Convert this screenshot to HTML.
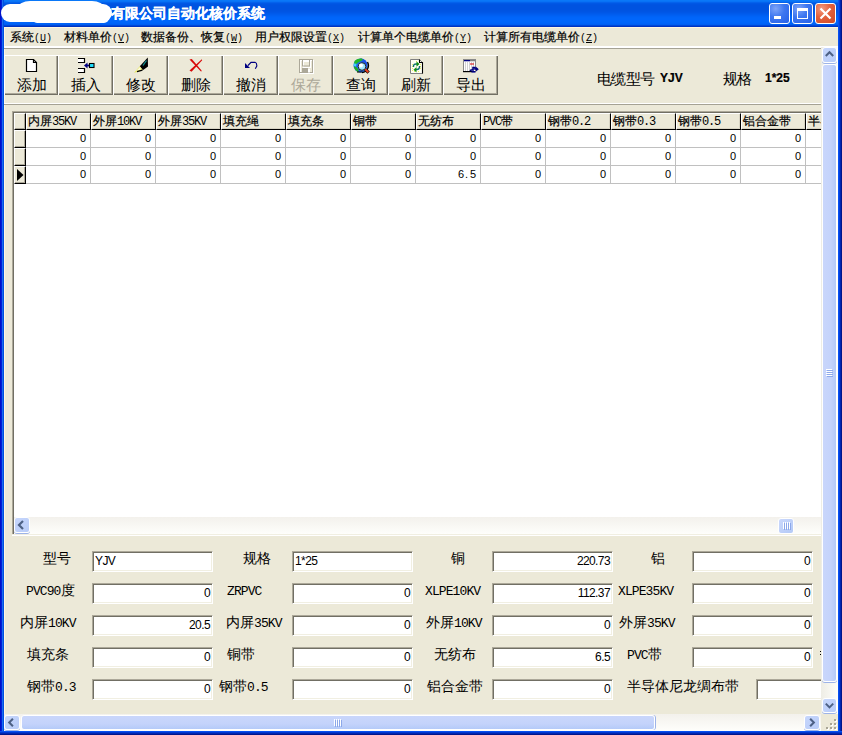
<!DOCTYPE html><html><head><meta charset="utf-8"><style>
html,body{margin:0;padding:0;}
body{width:842px;height:735px;overflow:hidden;position:relative;background:#ECE9D8;font-family:"Liberation Sans",sans-serif;}
div{position:absolute;box-sizing:border-box;}
.t{white-space:nowrap;line-height:1;color:#000;-webkit-text-stroke:0.2px currentColor;}
.m{font-family:"Liberation Mono",monospace;-webkit-text-stroke:0;}
.cj{font-family:"Liberation Sans",sans-serif;}
.tb{position:absolute;}
</style></head><body>
<div style="left:0px;top:0px;width:842px;height:27px;background:linear-gradient(to bottom,#0A78F8 0px, #0A78F8 1px,#0872F5 1px, #0872F5 2px,#0462EC 2px, #0462EC 3px,#0058E5 3px, #0058E5 4px,#0054E2 4px, #0054E2 5px,#0053E0 5px, #0053E0 6px,#0053E0 6px, #0053E0 7px,#0053E0 7px, #0053E0 8px,#0053E0 8px, #0053E0 9px,#0053E1 9px, #0053E1 10px,#0054E2 10px, #0054E2 11px,#0055E4 11px, #0055E4 12px,#0057E7 12px, #0057E7 13px,#005AEB 13px, #005AEB 14px,#005DEF 14px, #005DEF 15px,#0060F3 15px, #0060F3 16px,#0063F7 16px, #0063F7 17px,#0065FA 17px, #0065FA 18px,#0066FB 18px, #0066FB 19px,#0066FC 19px, #0066FC 20px,#0066FC 20px, #0066FC 21px,#0066FB 21px, #0066FB 22px,#0065FA 22px, #0065FA 23px,#0063F8 23px, #0063F8 24px,#005FF2 24px, #005FF2 25px,#0048D8 25px, #0048D8 26px,#0034C2 26px, #0034C2 27px);"></div>
<div class="t" style="left:111px;top:6px;color:#fff;font-size:14px;font-weight:bold;">有限公司自动化核价系统</div>
<div style="left:769px;top:3px;width:21px;height:21px;border:1px solid #fff;border-radius:3px;background:radial-gradient(circle at 30% 25%, #7EA4F8 0%, #3D76F0 45%, #2560E8 100%);">
<div style="left:4px;top:12px;width:7px;height:3px;background:#fff;"></div>
</div>
<div style="left:792px;top:3px;width:21px;height:21px;border:1px solid #fff;border-radius:3px;background:radial-gradient(circle at 30% 25%, #7EA4F8 0%, #3D76F0 45%, #2560E8 100%);">
<div style="left:4px;top:4px;width:11px;height:11px;border:1px solid #fff;border-top-width:3px;"></div>
</div>
<div style="left:815px;top:3px;width:21px;height:21px;border:1px solid #fff;border-radius:3px;background:radial-gradient(circle at 30% 25%, #F39B80 0%, #E3603C 45%, #D04A25 100%);">
<svg width="19" height="19" style="position:absolute;left:0;top:0" viewBox="0 0 19 19"><path d="M4.5 4.5 L14.5 14.5 M14.5 4.5 L4.5 14.5" stroke="#fff" stroke-width="2.2"/></svg>
</div>
<div style="left:0px;top:0px;width:1px;height:735px;background:#0010C8;"></div>
<div style="left:1px;top:0px;width:1px;height:735px;background:#0020D8;"></div>
<div style="left:2px;top:0px;width:1px;height:735px;background:#1A6CF0;"></div>
<div style="left:3px;top:0px;width:1px;height:735px;background:#0050E0;"></div>
<div style="left:838px;top:0px;width:1px;height:735px;background:#0850F0;"></div>
<div style="left:839px;top:0px;width:1px;height:735px;background:#003EDC;"></div>
<div style="left:840px;top:0px;width:1px;height:735px;background:#0026B0;"></div>
<div style="left:841px;top:0px;width:1px;height:735px;background:#00158A;"></div>
<div style="left:0px;top:731px;width:842px;height:1px;background:#0850F0;"></div>
<div style="left:0px;top:732px;width:842px;height:1px;background:#0038D0;"></div>
<div style="left:0px;top:733px;width:842px;height:1px;background:#0026B0;"></div>
<div style="left:0px;top:734px;width:842px;height:1px;background:#00168C;"></div>
<div style="left:0px;top:0px;width:842px;height:27px;background:linear-gradient(to bottom,#0A78F8 0px, #0A78F8 1px,#0872F5 1px, #0872F5 2px,#0462EC 2px, #0462EC 3px,#0058E5 3px, #0058E5 4px,#0054E2 4px, #0054E2 5px,#0053E0 5px, #0053E0 6px,#0053E0 6px, #0053E0 7px,#0053E0 7px, #0053E0 8px,#0053E0 8px, #0053E0 9px,#0053E1 9px, #0053E1 10px,#0054E2 10px, #0054E2 11px,#0055E4 11px, #0055E4 12px,#0057E7 12px, #0057E7 13px,#005AEB 13px, #005AEB 14px,#005DEF 14px, #005DEF 15px,#0060F3 15px, #0060F3 16px,#0063F7 16px, #0063F7 17px,#0065FA 17px, #0065FA 18px,#0066FB 18px, #0066FB 19px,#0066FC 19px, #0066FC 20px,#0066FC 20px, #0066FC 21px,#0066FB 21px, #0066FB 22px,#0065FA 22px, #0065FA 23px,#0063F8 23px, #0063F8 24px,#005FF2 24px, #005FF2 25px,#0048D8 25px, #0048D8 26px,#0034C2 26px, #0034C2 27px);z-index:-1"></div>
<div style="left:4px;top:27px;width:834px;height:1px;background:#FFF6E0;"></div>
<div style="left:4px;top:27px;width:1px;height:704px;background:#FFF7E4;"></div>
<div style="left:1px;top:4px;width:111px;height:18px;background:#fff;border-radius:9px;filter:blur(0.4px);"></div>
<div style="left:18px;top:1px;width:86px;height:14px;background:#fff;border-radius:12px/7px;filter:blur(0.4px);"></div>
<div style="left:32px;top:12px;width:77px;height:11px;background:#fff;border-radius:5px;filter:blur(0.4px);"></div>
<div class="t" style="left:10px;top:31px;font-size:12px;">系统<span class="m" style="font-size:10px;">(<u>U</u>)</span></div>
<div class="t" style="left:64px;top:31px;font-size:12px;">材料单价<span class="m" style="font-size:10px;">(<u>V</u>)</span></div>
<div class="t" style="left:141px;top:31px;font-size:12px;">数据备份、恢复<span class="m" style="font-size:10px;">(<u>W</u>)</span></div>
<div class="t" style="left:255px;top:31px;font-size:12px;">用户权限设置<span class="m" style="font-size:10px;">(<u>X</u>)</span></div>
<div class="t" style="left:358px;top:31px;font-size:12px;">计算单个电缆单价<span class="m" style="font-size:10px;">(<u>Y</u>)</span></div>
<div class="t" style="left:484px;top:31px;font-size:12px;">计算所有电缆单价<span class="m" style="font-size:10px;">(<u>Z</u>)</span></div>
<div style="left:4px;top:46px;width:834px;height:2px;background:#fff;"></div>
<div style="left:4px;top:48px;width:817px;height:1px;background:#A5A294;"></div>
<div style="left:4px;top:55px;width:54px;height:40px;background:#ECE9D8;border-left:1px solid #fff;border-top:1px solid #fff;box-shadow:inset -1px -1px 0 #716F64, inset -2px -2px 0 #ACA899;"></div>
<div class="t" style="left:17px;top:77px;font-size:15px;color:#000;-webkit-text-stroke:0;">添加</div>
<div style="left:58px;top:55px;width:55px;height:40px;background:#ECE9D8;border-left:1px solid #fff;border-top:1px solid #fff;box-shadow:inset -1px -1px 0 #716F64, inset -2px -2px 0 #ACA899;"></div>
<div class="t" style="left:71px;top:77px;font-size:15px;color:#000;-webkit-text-stroke:0;">插入</div>
<div style="left:113px;top:55px;width:55px;height:40px;background:#ECE9D8;border-left:1px solid #fff;border-top:1px solid #fff;box-shadow:inset -1px -1px 0 #716F64, inset -2px -2px 0 #ACA899;"></div>
<div class="t" style="left:126px;top:77px;font-size:15px;color:#000;-webkit-text-stroke:0;">修改</div>
<div style="left:168px;top:55px;width:55px;height:40px;background:#ECE9D8;border-left:1px solid #fff;border-top:1px solid #fff;box-shadow:inset -1px -1px 0 #716F64, inset -2px -2px 0 #ACA899;"></div>
<div class="t" style="left:181px;top:77px;font-size:15px;color:#000;-webkit-text-stroke:0;">删除</div>
<div style="left:223px;top:55px;width:55px;height:40px;background:#ECE9D8;border-left:1px solid #fff;border-top:1px solid #fff;box-shadow:inset -1px -1px 0 #716F64, inset -2px -2px 0 #ACA899;"></div>
<div class="t" style="left:236px;top:77px;font-size:15px;color:#000;-webkit-text-stroke:0;">撤消</div>
<div style="left:278px;top:55px;width:55px;height:40px;background:#ECE9D8;border-left:1px solid #fff;border-top:1px solid #fff;box-shadow:inset -1px -1px 0 #716F64, inset -2px -2px 0 #ACA899;"></div>
<div class="t" style="left:291px;top:77px;font-size:15px;color:#ACA899;-webkit-text-stroke:0;">保存</div>
<div style="left:333px;top:55px;width:55px;height:40px;background:#ECE9D8;border-left:1px solid #fff;border-top:1px solid #fff;box-shadow:inset -1px -1px 0 #716F64, inset -2px -2px 0 #ACA899;"></div>
<div class="t" style="left:346px;top:77px;font-size:15px;color:#000;-webkit-text-stroke:0;">查询</div>
<div style="left:388px;top:55px;width:55px;height:40px;background:#ECE9D8;border-left:1px solid #fff;border-top:1px solid #fff;box-shadow:inset -1px -1px 0 #716F64, inset -2px -2px 0 #ACA899;"></div>
<div class="t" style="left:401px;top:77px;font-size:15px;color:#000;-webkit-text-stroke:0;">刷新</div>
<div style="left:443px;top:55px;width:55px;height:40px;background:#ECE9D8;border-left:1px solid #fff;border-top:1px solid #fff;box-shadow:inset -1px -1px 0 #716F64, inset -2px -2px 0 #ACA899;"></div>
<div class="t" style="left:456px;top:77px;font-size:15px;color:#000;-webkit-text-stroke:0;">导出</div>
<div style="left:4px;top:103px;width:817px;height:1px;background:#fff;"></div>
<div style="left:4px;top:104px;width:817px;height:1px;background:#A5A294;"></div>
<svg width="842" height="100" style="position:absolute;left:0;top:0" viewBox="0 0 842 100">
<!-- new doc -->
<path d="M26.5 59.5 H33.5 L36.5 62.5 V71.5 H26.5 Z" fill="#fff" stroke="#000" stroke-width="1.2"/>
<path d="M33.5 59.5 V62.5 H36.5" fill="none" stroke="#000" stroke-width="1.2"/>
<!-- insert -->
<path d="M78 58.5 H84.5 V62.5 H78" fill="#fff" stroke="#000" stroke-width="1.2"/>
<path d="M78 68.5 H84.5 V72.5 H78" fill="#fff" stroke="#000" stroke-width="1.2"/>
<path d="M84 65.5 L87.5 62.5 V68.5 Z" fill="#000080"/>
<rect x="86" y="64.6" width="3.5" height="1.8" fill="#000080"/>
<rect x="89.5" y="63.5" width="4.5" height="4" fill="#20E0FF" stroke="#000" stroke-width="1.1"/>
<!-- edit pen -->
<path d="M147.8 57.6 L148 66.5 L142.8 70.3 L139.8 66.3 Z" fill="#000"/>
<path d="M139.8 66.3 L142.6 69.8 L138 71.8 L134 72.8 Z" fill="#E8E860"/>
<path d="M140 67 L136 71 L141 69.5 Z" fill="#fff" opacity="0.8"/>
<path d="M137 71.6 L142.5 70.2" stroke="#000" stroke-width="1.2"/>
<path d="M146.5 60.5 L143 65.5" stroke="#139090" stroke-width="1.3"/>
<!-- delete X -->
<path d="M189.5 59.5 L191.8 59 L201.6 70.6 L201.2 71.8 Z" fill="#D80808"/>
<path d="M201.8 59.2 L202.2 60.2 L191.5 71.8 L189.5 70.5 Z" fill="#D80808"/>
<!-- undo -->
<path d="M245 63 V68 H250 Z" fill="#000080"/>
<path d="M248 65.5 L251 62.3 H255 Q257 62.8 256.8 66 L255.3 68.8" fill="none" stroke="#000080" stroke-width="1.15"/>
<!-- save (disabled) -->
<g transform="translate(1,1)" fill="none" stroke="#fff" stroke-width="1">
<rect x="299.5" y="59.5" width="13" height="13"/><rect x="302.5" y="60.5" width="7" height="6"/>
</g>
<rect x="299.5" y="59.5" width="13" height="13" fill="none" stroke="#ACA899"/>
<rect x="302.5" y="59.5" width="7" height="6.5" fill="none" stroke="#ACA899"/>
<rect x="302" y="68" width="6" height="4.5" fill="#ACA899"/>
<rect x="308" y="69" width="2" height="3.5" fill="#fff"/>
<!-- query globe -->
<circle cx="360.5" cy="65.5" r="7" fill="#1E64F0"/>
<path d="M360.5 58.5 A7 7 0 0 1 367.5 65.5 L363 65 Z" fill="#1850E8"/>
<path d="M354.5 61 Q357 58 362 58.6 L363 60 Q360 61.5 357.5 63 L355 65.5 Q353.6 63.5 354.5 61 Z" fill="#20B828"/>
<path d="M354 63.5 L356.5 63.8 L356 66.5 L353.6 66 Z" fill="#40D0FF"/>
<path d="M353.8 66.5 Q356.5 66 358 69 L359 72.3 Q355 71.2 353.8 66.5 Z" fill="#20B020"/>
<path d="M367.5 62 A7 7 0 0 1 362 72.5" fill="none" stroke="#000" stroke-width="1.3"/>
<path d="M357 72 H362" stroke="#000" stroke-width="1"/>
<circle cx="362" cy="66.5" r="3.8" fill="#9EE6FF" stroke="#282828" stroke-width="1"/>
<circle cx="361" cy="65.5" r="1.9" fill="#fff"/>
<path d="M365.3 69.3 L368.6 72.6" stroke="#000" stroke-width="3.2"/>
<path d="M365.3 69.3 L368.3 72.3" stroke="#E84020" stroke-width="2"/>
<!-- refresh -->
<path d="M410.5 59.5 H419.5 L422.5 62.5 V73.5 H410.5 Z" fill="#FDFDF4" stroke="#808080"/>
<path d="M419.5 59.5 V62.5 H422.5 V73.5" fill="none" stroke="#000" stroke-width="1.1"/>
<g fill="#F0F060"><rect x="412" y="64" width="1" height="1"/><rect x="412" y="66" width="1" height="1"/><rect x="412" y="68" width="1" height="1"/><rect x="412" y="70" width="1" height="1"/><rect x="414" y="71" width="1" height="1"/><rect x="416" y="61" width="1" height="1"/><rect x="420" y="64" width="1" height="1"/><rect x="420" y="66" width="1" height="1"/><rect x="420" y="68" width="1" height="1"/><rect x="418" y="71" width="1" height="1"/></g>
<path d="M413.5 67 V65.5 Q414 64 416 64 H417.5" fill="none" stroke="#107070" stroke-width="1.4"/>
<path d="M416.5 61.5 L419.5 64 L416.5 66.8 Z" fill="#109010"/>
<path d="M419.5 66 V67.5 Q419 69.5 417 69.5 H415.5" fill="none" stroke="#107070" stroke-width="1.4"/>
<path d="M416.5 67 L413.5 69.8 L416.5 72.5 Z" fill="#109010"/>
<!-- export -->
<rect x="463.5" y="59.5" width="12" height="12" fill="#fff" stroke="#8A8A8A"/>
<rect x="464" y="60" width="6" height="1.3" fill="#000080"/>
<rect x="470" y="60" width="5" height="1.3" fill="#808080"/>
<path d="M465.5 62 V71 M467.5 62 V71 M469.5 62 V71 M471.5 62 V71 M473.5 62 V71" stroke="#C8C8C8" stroke-width="0.8"/>
<rect x="463" y="71" width="9" height="1.2" fill="#000"/>
<rect x="470.5" y="63" width="1" height="2" fill="#E00000"/><rect x="472.5" y="63" width="1" height="2" fill="#E00000"/>
<path d="M470 71 L471 70 H473 V67.5 H475 V69 H477.5" fill="none" stroke="#000080" stroke-width="1.6"/>
<path d="M476 66.8 L478.8 69.2 L476 71.6 Z" fill="#000080"/>
<rect x="471.5" y="71" width="4" height="1.6" fill="#000080"/>
</svg>
<div class="t" style="left:597px;top:71px;font-size:15px;letter-spacing:-0.6px;-webkit-text-stroke:0;">电缆型号</div>
<div class="t" style="left:660px;top:72px;font-size:12px;font-weight:bold;">YJV</div>
<div class="t" style="left:723px;top:71px;font-size:15px;letter-spacing:-0.6px;-webkit-text-stroke:0;">规格</div>
<div class="t" style="left:765px;top:72px;font-size:12px;font-weight:bold;">1*25</div>
<div style="left:12px;top:111px;width:810px;height:1px;background:#ACA899;"></div>
<div style="left:12px;top:111px;width:1px;height:425px;background:#ACA899;"></div>
<div style="left:13px;top:112px;width:809px;height:1px;background:#716F64;"></div>
<div style="left:13px;top:112px;width:1px;height:423px;background:#716F64;"></div>
<div style="left:14px;top:113px;width:807px;height:404px;background:#fff;"></div>
<div style="left:14px;top:113px;width:12px;height:17px;background:#ECE9D8;border-left:1px solid #fff;border-top:1px solid #fff;border-right:1px solid #000;border-bottom:1px solid #000;box-shadow:inset -1px -1px 0 #ACA899;"></div>
<div style="left:14px;top:113px;width:808px;height:17px;overflow:hidden;">
<div style="left:12px;top:0;width:65px;height:17px;background:#ECE9D8;border-left:1px solid #fff;border-top:1px solid #fff;border-right:1px solid #000;border-bottom:1px solid #000;box-shadow:inset -1px -1px 0 #D8D4C4;"></div>
<div class="t" style="left:14px;top:2px;font-size:12px;">内屏<span class="m" style="font-size:12px;letter-spacing:-1.2px">35KV</span></div>
<div style="left:77px;top:0;width:65px;height:17px;background:#ECE9D8;border-left:1px solid #fff;border-top:1px solid #fff;border-right:1px solid #000;border-bottom:1px solid #000;box-shadow:inset -1px -1px 0 #D8D4C4;"></div>
<div class="t" style="left:79px;top:2px;font-size:12px;">外屏<span class="m" style="font-size:12px;letter-spacing:-1.2px">10KV</span></div>
<div style="left:142px;top:0;width:65px;height:17px;background:#ECE9D8;border-left:1px solid #fff;border-top:1px solid #fff;border-right:1px solid #000;border-bottom:1px solid #000;box-shadow:inset -1px -1px 0 #D8D4C4;"></div>
<div class="t" style="left:144px;top:2px;font-size:12px;">外屏<span class="m" style="font-size:12px;letter-spacing:-1.2px">35KV</span></div>
<div style="left:207px;top:0;width:65px;height:17px;background:#ECE9D8;border-left:1px solid #fff;border-top:1px solid #fff;border-right:1px solid #000;border-bottom:1px solid #000;box-shadow:inset -1px -1px 0 #D8D4C4;"></div>
<div class="t" style="left:209px;top:2px;font-size:12px;">填充绳</div>
<div style="left:272px;top:0;width:65px;height:17px;background:#ECE9D8;border-left:1px solid #fff;border-top:1px solid #fff;border-right:1px solid #000;border-bottom:1px solid #000;box-shadow:inset -1px -1px 0 #D8D4C4;"></div>
<div class="t" style="left:274px;top:2px;font-size:12px;">填充条</div>
<div style="left:337px;top:0;width:65px;height:17px;background:#ECE9D8;border-left:1px solid #fff;border-top:1px solid #fff;border-right:1px solid #000;border-bottom:1px solid #000;box-shadow:inset -1px -1px 0 #D8D4C4;"></div>
<div class="t" style="left:339px;top:2px;font-size:12px;">铜带</div>
<div style="left:402px;top:0;width:65px;height:17px;background:#ECE9D8;border-left:1px solid #fff;border-top:1px solid #fff;border-right:1px solid #000;border-bottom:1px solid #000;box-shadow:inset -1px -1px 0 #D8D4C4;"></div>
<div class="t" style="left:404px;top:2px;font-size:12px;">无纺布</div>
<div style="left:467px;top:0;width:65px;height:17px;background:#ECE9D8;border-left:1px solid #fff;border-top:1px solid #fff;border-right:1px solid #000;border-bottom:1px solid #000;box-shadow:inset -1px -1px 0 #D8D4C4;"></div>
<div class="t" style="left:469px;top:2px;font-size:12px;"><span class="m" style="font-size:12px;letter-spacing:-1.2px">PVC</span>带</div>
<div style="left:532px;top:0;width:65px;height:17px;background:#ECE9D8;border-left:1px solid #fff;border-top:1px solid #fff;border-right:1px solid #000;border-bottom:1px solid #000;box-shadow:inset -1px -1px 0 #D8D4C4;"></div>
<div class="t" style="left:534px;top:2px;font-size:12px;">钢带<span class="m" style="font-size:12px;letter-spacing:-1.2px">0.2</span></div>
<div style="left:597px;top:0;width:65px;height:17px;background:#ECE9D8;border-left:1px solid #fff;border-top:1px solid #fff;border-right:1px solid #000;border-bottom:1px solid #000;box-shadow:inset -1px -1px 0 #D8D4C4;"></div>
<div class="t" style="left:599px;top:2px;font-size:12px;">钢带<span class="m" style="font-size:12px;letter-spacing:-1.2px">0.3</span></div>
<div style="left:662px;top:0;width:65px;height:17px;background:#ECE9D8;border-left:1px solid #fff;border-top:1px solid #fff;border-right:1px solid #000;border-bottom:1px solid #000;box-shadow:inset -1px -1px 0 #D8D4C4;"></div>
<div class="t" style="left:664px;top:2px;font-size:12px;">钢带<span class="m" style="font-size:12px;letter-spacing:-1.2px">0.5</span></div>
<div style="left:727px;top:0;width:65px;height:17px;background:#ECE9D8;border-left:1px solid #fff;border-top:1px solid #fff;border-right:1px solid #000;border-bottom:1px solid #000;box-shadow:inset -1px -1px 0 #D8D4C4;"></div>
<div class="t" style="left:729px;top:2px;font-size:12px;">铝合金带</div>
<div style="left:792px;top:0;width:65px;height:17px;background:#ECE9D8;border-left:1px solid #fff;border-top:1px solid #fff;border-right:1px solid #000;border-bottom:1px solid #000;box-shadow:inset -1px -1px 0 #D8D4C4;"></div>
<div class="t" style="left:794px;top:2px;font-size:12px;">半导体尼龙绸布带</div>
</div>
<div style="left:14px;top:130px;width:12px;height:18px;background:#ECE9D8;border-left:1px solid #fff;border-top:1px solid #fff;border-right:1px solid #000;border-bottom:1px solid #000;box-shadow:inset -1px -1px 0 #ACA899;"></div>
<div style="left:26px;top:147px;width:795px;height:1px;background:#C0C0C0;"></div>
<div style="left:14px;top:148px;width:12px;height:18px;background:#ECE9D8;border-left:1px solid #fff;border-top:1px solid #fff;border-right:1px solid #000;border-bottom:1px solid #000;box-shadow:inset -1px -1px 0 #ACA899;"></div>
<div style="left:26px;top:165px;width:795px;height:1px;background:#C0C0C0;"></div>
<div style="left:14px;top:166px;width:12px;height:18px;background:#ECE9D8;border-left:1px solid #fff;border-top:1px solid #fff;border-right:1px solid #000;border-bottom:1px solid #000;box-shadow:inset -1px -1px 0 #ACA899;"></div>
<div style="left:26px;top:183px;width:795px;height:1px;background:#C0C0C0;"></div>
<svg width="8" height="12" style="position:absolute;left:17px;top:169px" viewBox="0 0 8 12"><path d="M0 0 L6.5 6 L0 12 Z" fill="#000"/></svg>
<div style="left:90px;top:130px;width:1px;height:54px;background:#C0C0C0;"></div>
<div style="left:155px;top:130px;width:1px;height:54px;background:#C0C0C0;"></div>
<div style="left:220px;top:130px;width:1px;height:54px;background:#C0C0C0;"></div>
<div style="left:285px;top:130px;width:1px;height:54px;background:#C0C0C0;"></div>
<div style="left:350px;top:130px;width:1px;height:54px;background:#C0C0C0;"></div>
<div style="left:415px;top:130px;width:1px;height:54px;background:#C0C0C0;"></div>
<div style="left:480px;top:130px;width:1px;height:54px;background:#C0C0C0;"></div>
<div style="left:545px;top:130px;width:1px;height:54px;background:#C0C0C0;"></div>
<div style="left:610px;top:130px;width:1px;height:54px;background:#C0C0C0;"></div>
<div style="left:675px;top:130px;width:1px;height:54px;background:#C0C0C0;"></div>
<div style="left:740px;top:130px;width:1px;height:54px;background:#C0C0C0;"></div>
<div style="left:805px;top:130px;width:1px;height:54px;background:#C0C0C0;"></div>
<div style="left:26px;top:130px;width:795px;height:54px;overflow:hidden;">
<div class="t" style="left:30px;top:3px;font-size:11px;-webkit-text-stroke:0;width:30px;text-align:right;">0</div>
<div class="t" style="left:95px;top:3px;font-size:11px;-webkit-text-stroke:0;width:30px;text-align:right;">0</div>
<div class="t" style="left:160px;top:3px;font-size:11px;-webkit-text-stroke:0;width:30px;text-align:right;">0</div>
<div class="t" style="left:225px;top:3px;font-size:11px;-webkit-text-stroke:0;width:30px;text-align:right;">0</div>
<div class="t" style="left:290px;top:3px;font-size:11px;-webkit-text-stroke:0;width:30px;text-align:right;">0</div>
<div class="t" style="left:355px;top:3px;font-size:11px;-webkit-text-stroke:0;width:30px;text-align:right;">0</div>
<div class="t" style="left:420px;top:3px;font-size:11px;-webkit-text-stroke:0;width:30px;text-align:right;">0</div>
<div class="t" style="left:485px;top:3px;font-size:11px;-webkit-text-stroke:0;width:30px;text-align:right;">0</div>
<div class="t" style="left:550px;top:3px;font-size:11px;-webkit-text-stroke:0;width:30px;text-align:right;">0</div>
<div class="t" style="left:615px;top:3px;font-size:11px;-webkit-text-stroke:0;width:30px;text-align:right;">0</div>
<div class="t" style="left:680px;top:3px;font-size:11px;-webkit-text-stroke:0;width:30px;text-align:right;">0</div>
<div class="t" style="left:745px;top:3px;font-size:11px;-webkit-text-stroke:0;width:30px;text-align:right;">0</div>
<div class="t" style="left:810px;top:3px;font-size:11px;-webkit-text-stroke:0;width:30px;text-align:right;">0</div>
<div class="t" style="left:30px;top:21px;font-size:11px;-webkit-text-stroke:0;width:30px;text-align:right;">0</div>
<div class="t" style="left:95px;top:21px;font-size:11px;-webkit-text-stroke:0;width:30px;text-align:right;">0</div>
<div class="t" style="left:160px;top:21px;font-size:11px;-webkit-text-stroke:0;width:30px;text-align:right;">0</div>
<div class="t" style="left:225px;top:21px;font-size:11px;-webkit-text-stroke:0;width:30px;text-align:right;">0</div>
<div class="t" style="left:290px;top:21px;font-size:11px;-webkit-text-stroke:0;width:30px;text-align:right;">0</div>
<div class="t" style="left:355px;top:21px;font-size:11px;-webkit-text-stroke:0;width:30px;text-align:right;">0</div>
<div class="t" style="left:420px;top:21px;font-size:11px;-webkit-text-stroke:0;width:30px;text-align:right;">0</div>
<div class="t" style="left:485px;top:21px;font-size:11px;-webkit-text-stroke:0;width:30px;text-align:right;">0</div>
<div class="t" style="left:550px;top:21px;font-size:11px;-webkit-text-stroke:0;width:30px;text-align:right;">0</div>
<div class="t" style="left:615px;top:21px;font-size:11px;-webkit-text-stroke:0;width:30px;text-align:right;">0</div>
<div class="t" style="left:680px;top:21px;font-size:11px;-webkit-text-stroke:0;width:30px;text-align:right;">0</div>
<div class="t" style="left:745px;top:21px;font-size:11px;-webkit-text-stroke:0;width:30px;text-align:right;">0</div>
<div class="t" style="left:810px;top:21px;font-size:11px;-webkit-text-stroke:0;width:30px;text-align:right;">0</div>
<div class="t" style="left:30px;top:39px;font-size:11px;-webkit-text-stroke:0;width:30px;text-align:right;">0</div>
<div class="t" style="left:95px;top:39px;font-size:11px;-webkit-text-stroke:0;width:30px;text-align:right;">0</div>
<div class="t" style="left:160px;top:39px;font-size:11px;-webkit-text-stroke:0;width:30px;text-align:right;">0</div>
<div class="t" style="left:225px;top:39px;font-size:11px;-webkit-text-stroke:0;width:30px;text-align:right;">0</div>
<div class="t" style="left:290px;top:39px;font-size:11px;-webkit-text-stroke:0;width:30px;text-align:right;">0</div>
<div class="t" style="left:355px;top:39px;font-size:11px;-webkit-text-stroke:0;width:30px;text-align:right;">0</div>
<div class="t" style="left:432px;top:39px;font-size:11px;-webkit-text-stroke:0;">6</div>
<div class="t" style="left:439px;top:39px;font-size:11px;-webkit-text-stroke:0;">.</div>
<div class="t" style="left:444px;top:39px;font-size:11px;-webkit-text-stroke:0;">5</div>
<div class="t" style="left:485px;top:39px;font-size:11px;-webkit-text-stroke:0;width:30px;text-align:right;">0</div>
<div class="t" style="left:550px;top:39px;font-size:11px;-webkit-text-stroke:0;width:30px;text-align:right;">0</div>
<div class="t" style="left:615px;top:39px;font-size:11px;-webkit-text-stroke:0;width:30px;text-align:right;">0</div>
<div class="t" style="left:680px;top:39px;font-size:11px;-webkit-text-stroke:0;width:30px;text-align:right;">0</div>
<div class="t" style="left:745px;top:39px;font-size:11px;-webkit-text-stroke:0;width:30px;text-align:right;">0</div>
<div class="t" style="left:810px;top:39px;font-size:11px;-webkit-text-stroke:0;width:30px;text-align:right;">0</div>
</div>
<div style="left:14px;top:517px;width:807px;height:17px;background:linear-gradient(to bottom,#F3F1EC,#FEFEFB);"></div>
<div style="left:14px;top:517px;width:16px;height:16px;border:1px solid #fff;border-radius:3px;background:linear-gradient(135deg,#C6D6FC 0%,#B8CCF8 100%);box-shadow:0 1px 0 #9DB3E8;">
<svg width="14" height="14" style="position:absolute;left:0;top:0" viewBox="0 0 14 14"><path d="M8 3 L4 7 L8 11" fill="none" stroke="#4D6185" stroke-width="2.2"/></svg>
</div>
<div style="left:778px;top:518px;width:16px;height:16px;border:1px solid #fff;border-radius:3px;background:linear-gradient(135deg,#CAD8FC,#B4CAF6);"></div>
<div style="left:783px;top:522px;width:1px;height:7px;background:#fff;"></div>
<div style="left:784px;top:523px;width:1px;height:7px;background:#8CA8EA;"></div>
<div style="left:785px;top:522px;width:1px;height:7px;background:#fff;"></div>
<div style="left:786px;top:523px;width:1px;height:7px;background:#8CA8EA;"></div>
<div style="left:787px;top:522px;width:1px;height:7px;background:#fff;"></div>
<div style="left:788px;top:523px;width:1px;height:7px;background:#8CA8EA;"></div>
<div style="left:789px;top:522px;width:1px;height:7px;background:#fff;"></div>
<div style="left:790px;top:523px;width:1px;height:7px;background:#8CA8EA;"></div>
<div style="left:12px;top:534px;width:810px;height:1px;background:#F1EFE2;"></div>
<div style="left:12px;top:535px;width:810px;height:1px;background:#fff;"></div>
<div style="left:821px;top:47px;width:17px;height:667px;background:linear-gradient(to right,#EEEDE5,#FEFEFA);"></div>
<div style="left:822px;top:47px;width:15px;height:16px;border:1px solid #fff;border-radius:3px;background:linear-gradient(135deg,#C6D6FC 0%,#B8CCF8 100%);box-shadow:0 1px 0 #9DB3E8;">
<svg width="13" height="14" style="position:absolute;left:0;top:0" viewBox="0 0 14 14"><path d="M3 8 L7 4 L11 8" fill="none" stroke="#4D6185" stroke-width="2.2"/></svg>
</div>
<div style="left:822px;top:64px;width:15px;height:618px;border:1px solid #fff;border-radius:3px;background:linear-gradient(to right,#C9D6FB,#C4D3FB 60%,#B4CAF8);box-shadow:0 1px 0 #9DB3E8;"></div>
<div style="left:826px;top:369px;width:6px;height:1px;background:#fff;"></div>
<div style="left:827px;top:370px;width:6px;height:1px;background:#8CA8EA;"></div>
<div style="left:826px;top:371px;width:6px;height:1px;background:#fff;"></div>
<div style="left:827px;top:372px;width:6px;height:1px;background:#8CA8EA;"></div>
<div style="left:826px;top:373px;width:6px;height:1px;background:#fff;"></div>
<div style="left:827px;top:374px;width:6px;height:1px;background:#8CA8EA;"></div>
<div style="left:826px;top:375px;width:6px;height:1px;background:#fff;"></div>
<div style="left:827px;top:376px;width:6px;height:1px;background:#8CA8EA;"></div>
<div style="left:822px;top:698px;width:15px;height:15px;border:1px solid #fff;border-radius:3px;background:linear-gradient(135deg,#C6D6FC 0%,#B8CCF8 100%);box-shadow:0 1px 0 #9DB3E8;">
<svg width="13" height="13" style="position:absolute;left:0;top:0" viewBox="0 0 14 14"><path d="M3 5 L7 9 L11 5" fill="none" stroke="#4D6185" stroke-width="2.2"/></svg>
</div>
<div style="left:4px;top:714px;width:817px;height:17px;background:linear-gradient(to bottom,#F3F1EC,#FEFEFB);"></div>
<div style="left:4px;top:715px;width:16px;height:15px;border:1px solid #fff;border-radius:3px;background:linear-gradient(135deg,#C6D6FC 0%,#B8CCF8 100%);box-shadow:0 1px 0 #9DB3E8;">
<svg width="14" height="13" style="position:absolute;left:0;top:0" viewBox="0 0 14 14"><path d="M8 3 L4 7 L8 11" fill="none" stroke="#4D6185" stroke-width="2.2"/></svg>
</div>
<div style="left:21px;top:715px;width:634px;height:15px;border:1px solid #fff;border-radius:3px;background:linear-gradient(to bottom,#C9D6FB,#C4D3FB 60%,#B4CAF8);box-shadow:1px 0 0 #9DB3E8;"></div>
<div style="left:334px;top:719px;width:1px;height:7px;background:#fff;"></div>
<div style="left:335px;top:720px;width:1px;height:7px;background:#8CA8EA;"></div>
<div style="left:336px;top:719px;width:1px;height:7px;background:#fff;"></div>
<div style="left:337px;top:720px;width:1px;height:7px;background:#8CA8EA;"></div>
<div style="left:338px;top:719px;width:1px;height:7px;background:#fff;"></div>
<div style="left:339px;top:720px;width:1px;height:7px;background:#8CA8EA;"></div>
<div style="left:340px;top:719px;width:1px;height:7px;background:#fff;"></div>
<div style="left:341px;top:720px;width:1px;height:7px;background:#8CA8EA;"></div>
<div style="left:804px;top:715px;width:16px;height:15px;border:1px solid #fff;border-radius:3px;background:linear-gradient(135deg,#C6D6FC 0%,#B8CCF8 100%);box-shadow:0 1px 0 #9DB3E8;">
<svg width="14" height="13" style="position:absolute;left:0;top:0" viewBox="0 0 14 14"><path d="M5 3 L9 7 L5 11" fill="none" stroke="#4D6185" stroke-width="2.2"/></svg>
</div>
<div style="left:821px;top:714px;width:17px;height:17px;background:#ECE9D8;"></div>
<div style="left:835px;top:720px;width:2px;height:2px;background:#fff;"></div>
<div style="left:831px;top:724px;width:2px;height:2px;background:#fff;"></div>
<div style="left:835px;top:724px;width:2px;height:2px;background:#fff;"></div>
<div style="left:827px;top:728px;width:2px;height:2px;background:#fff;"></div>
<div style="left:831px;top:728px;width:2px;height:2px;background:#fff;"></div>
<div style="left:835px;top:728px;width:2px;height:2px;background:#fff;"></div>
<div style="left:834px;top:719px;width:2px;height:2px;background:#A8A596;"></div>
<div style="left:830px;top:723px;width:2px;height:2px;background:#A8A596;"></div>
<div style="left:834px;top:723px;width:2px;height:2px;background:#A8A596;"></div>
<div style="left:826px;top:727px;width:2px;height:2px;background:#A8A596;"></div>
<div style="left:830px;top:727px;width:2px;height:2px;background:#A8A596;"></div>
<div style="left:834px;top:727px;width:2px;height:2px;background:#A8A596;"></div>
<div class="t" style="left:43px;top:551px;font-size:14px;letter-spacing:0px;-webkit-text-stroke:0;">型号</div>
<div style="left:92px;top:551px;width:121px;height:21px;background:#fff;border-top:1px solid #ACA899;border-left:1px solid #ACA899;border-bottom:1px solid #fff;border-right:1px solid #fff;box-shadow:inset 1px 1px 0 #716F64, inset -1px -1px 0 #F1EFE2;"></div>
<div class="t" style="left:95px;top:555px;font-size:12px;letter-spacing:-0.6px;-webkit-text-stroke:0;">YJV</div>
<div class="t" style="left:243px;top:551px;font-size:14px;letter-spacing:0px;-webkit-text-stroke:0;">规格</div>
<div style="left:292px;top:551px;width:121px;height:21px;background:#fff;border-top:1px solid #ACA899;border-left:1px solid #ACA899;border-bottom:1px solid #fff;border-right:1px solid #fff;box-shadow:inset 1px 1px 0 #716F64, inset -1px -1px 0 #F1EFE2;"></div>
<div class="t" style="left:295px;top:555px;font-size:12px;letter-spacing:-0.6px;-webkit-text-stroke:0;">1*25</div>
<div class="t" style="left:451px;top:551px;font-size:14px;letter-spacing:0px;-webkit-text-stroke:0;">铜</div>
<div style="left:492px;top:551px;width:121px;height:21px;background:#fff;border-top:1px solid #ACA899;border-left:1px solid #ACA899;border-bottom:1px solid #fff;border-right:1px solid #fff;box-shadow:inset 1px 1px 0 #716F64, inset -1px -1px 0 #F1EFE2;"></div>
<div class="t" style="left:492px;top:555px;width:118px;text-align:right;font-size:12px;letter-spacing:-0.6px;-webkit-text-stroke:0;">220.73</div>
<div class="t" style="left:651px;top:551px;font-size:14px;letter-spacing:0px;-webkit-text-stroke:0;">铝</div>
<div style="left:692px;top:551px;width:121px;height:21px;background:#fff;border-top:1px solid #ACA899;border-left:1px solid #ACA899;border-bottom:1px solid #fff;border-right:1px solid #fff;box-shadow:inset 1px 1px 0 #716F64, inset -1px -1px 0 #F1EFE2;"></div>
<div class="t" style="left:692px;top:555px;width:118px;text-align:right;font-size:12px;letter-spacing:-0.6px;-webkit-text-stroke:0;">0</div>
<div class="t" style="left:26px;top:583px;font-size:14px;letter-spacing:0px;-webkit-text-stroke:0;"><span class="m" style="font-size:13px;letter-spacing:-0.9px">PVC90</span>度</div>
<div style="left:92px;top:583px;width:121px;height:21px;background:#fff;border-top:1px solid #ACA899;border-left:1px solid #ACA899;border-bottom:1px solid #fff;border-right:1px solid #fff;box-shadow:inset 1px 1px 0 #716F64, inset -1px -1px 0 #F1EFE2;"></div>
<div class="t" style="left:92px;top:587px;width:118px;text-align:right;font-size:12px;letter-spacing:-0.6px;-webkit-text-stroke:0;">0</div>
<div class="t" style="left:227px;top:583px;font-size:14px;letter-spacing:0px;-webkit-text-stroke:0;"><span class="m" style="font-size:13px;letter-spacing:-0.9px">ZRPVC</span></div>
<div style="left:292px;top:583px;width:121px;height:21px;background:#fff;border-top:1px solid #ACA899;border-left:1px solid #ACA899;border-bottom:1px solid #fff;border-right:1px solid #fff;box-shadow:inset 1px 1px 0 #716F64, inset -1px -1px 0 #F1EFE2;"></div>
<div class="t" style="left:292px;top:587px;width:118px;text-align:right;font-size:12px;letter-spacing:-0.6px;-webkit-text-stroke:0;">0</div>
<div class="t" style="left:425px;top:583px;font-size:14px;letter-spacing:0px;-webkit-text-stroke:0;"><span class="m" style="font-size:13px;letter-spacing:-0.9px">XLPE10KV</span></div>
<div style="left:492px;top:583px;width:121px;height:21px;background:#fff;border-top:1px solid #ACA899;border-left:1px solid #ACA899;border-bottom:1px solid #fff;border-right:1px solid #fff;box-shadow:inset 1px 1px 0 #716F64, inset -1px -1px 0 #F1EFE2;"></div>
<div class="t" style="left:492px;top:587px;width:118px;text-align:right;font-size:12px;letter-spacing:-0.6px;-webkit-text-stroke:0;">112.37</div>
<div class="t" style="left:618px;top:583px;font-size:14px;letter-spacing:0px;-webkit-text-stroke:0;"><span class="m" style="font-size:13px;letter-spacing:-0.9px">XLPE35KV</span></div>
<div style="left:692px;top:583px;width:121px;height:21px;background:#fff;border-top:1px solid #ACA899;border-left:1px solid #ACA899;border-bottom:1px solid #fff;border-right:1px solid #fff;box-shadow:inset 1px 1px 0 #716F64, inset -1px -1px 0 #F1EFE2;"></div>
<div class="t" style="left:692px;top:587px;width:118px;text-align:right;font-size:12px;letter-spacing:-0.6px;-webkit-text-stroke:0;">0</div>
<div class="t" style="left:20px;top:615px;font-size:14px;letter-spacing:0px;-webkit-text-stroke:0;">内屏<span class="m" style="font-size:13px;letter-spacing:-0.9px">10KV</span></div>
<div style="left:92px;top:615px;width:121px;height:21px;background:#fff;border-top:1px solid #ACA899;border-left:1px solid #ACA899;border-bottom:1px solid #fff;border-right:1px solid #fff;box-shadow:inset 1px 1px 0 #716F64, inset -1px -1px 0 #F1EFE2;"></div>
<div class="t" style="left:92px;top:619px;width:118px;text-align:right;font-size:12px;letter-spacing:-0.6px;-webkit-text-stroke:0;">20.5</div>
<div class="t" style="left:226px;top:615px;font-size:14px;letter-spacing:0px;-webkit-text-stroke:0;">内屏<span class="m" style="font-size:13px;letter-spacing:-0.9px">35KV</span></div>
<div style="left:292px;top:615px;width:121px;height:21px;background:#fff;border-top:1px solid #ACA899;border-left:1px solid #ACA899;border-bottom:1px solid #fff;border-right:1px solid #fff;box-shadow:inset 1px 1px 0 #716F64, inset -1px -1px 0 #F1EFE2;"></div>
<div class="t" style="left:292px;top:619px;width:118px;text-align:right;font-size:12px;letter-spacing:-0.6px;-webkit-text-stroke:0;">0</div>
<div class="t" style="left:426px;top:615px;font-size:14px;letter-spacing:0px;-webkit-text-stroke:0;">外屏<span class="m" style="font-size:13px;letter-spacing:-0.9px">10KV</span></div>
<div style="left:492px;top:615px;width:121px;height:21px;background:#fff;border-top:1px solid #ACA899;border-left:1px solid #ACA899;border-bottom:1px solid #fff;border-right:1px solid #fff;box-shadow:inset 1px 1px 0 #716F64, inset -1px -1px 0 #F1EFE2;"></div>
<div class="t" style="left:492px;top:619px;width:118px;text-align:right;font-size:12px;letter-spacing:-0.6px;-webkit-text-stroke:0;">0</div>
<div class="t" style="left:619px;top:615px;font-size:14px;letter-spacing:0px;-webkit-text-stroke:0;">外屏<span class="m" style="font-size:13px;letter-spacing:-0.9px">35KV</span></div>
<div style="left:692px;top:615px;width:121px;height:21px;background:#fff;border-top:1px solid #ACA899;border-left:1px solid #ACA899;border-bottom:1px solid #fff;border-right:1px solid #fff;box-shadow:inset 1px 1px 0 #716F64, inset -1px -1px 0 #F1EFE2;"></div>
<div class="t" style="left:692px;top:619px;width:118px;text-align:right;font-size:12px;letter-spacing:-0.6px;-webkit-text-stroke:0;">0</div>
<div class="t" style="left:27px;top:647px;font-size:14px;letter-spacing:0px;-webkit-text-stroke:0;">填充条</div>
<div style="left:92px;top:647px;width:121px;height:21px;background:#fff;border-top:1px solid #ACA899;border-left:1px solid #ACA899;border-bottom:1px solid #fff;border-right:1px solid #fff;box-shadow:inset 1px 1px 0 #716F64, inset -1px -1px 0 #F1EFE2;"></div>
<div class="t" style="left:92px;top:651px;width:118px;text-align:right;font-size:12px;letter-spacing:-0.6px;-webkit-text-stroke:0;">0</div>
<div class="t" style="left:227px;top:647px;font-size:14px;letter-spacing:0px;-webkit-text-stroke:0;">铜带</div>
<div style="left:292px;top:647px;width:121px;height:21px;background:#fff;border-top:1px solid #ACA899;border-left:1px solid #ACA899;border-bottom:1px solid #fff;border-right:1px solid #fff;box-shadow:inset 1px 1px 0 #716F64, inset -1px -1px 0 #F1EFE2;"></div>
<div class="t" style="left:292px;top:651px;width:118px;text-align:right;font-size:12px;letter-spacing:-0.6px;-webkit-text-stroke:0;">0</div>
<div class="t" style="left:434px;top:647px;font-size:14px;letter-spacing:0px;-webkit-text-stroke:0;">无纺布</div>
<div style="left:492px;top:647px;width:121px;height:21px;background:#fff;border-top:1px solid #ACA899;border-left:1px solid #ACA899;border-bottom:1px solid #fff;border-right:1px solid #fff;box-shadow:inset 1px 1px 0 #716F64, inset -1px -1px 0 #F1EFE2;"></div>
<div class="t" style="left:492px;top:651px;width:118px;text-align:right;font-size:12px;letter-spacing:-0.6px;-webkit-text-stroke:0;">6.5</div>
<div class="t" style="left:627px;top:647px;font-size:14px;letter-spacing:0px;-webkit-text-stroke:0;"><span class="m" style="font-size:13px;letter-spacing:-0.9px">PVC</span>带</div>
<div style="left:692px;top:647px;width:121px;height:21px;background:#fff;border-top:1px solid #ACA899;border-left:1px solid #ACA899;border-bottom:1px solid #fff;border-right:1px solid #fff;box-shadow:inset 1px 1px 0 #716F64, inset -1px -1px 0 #F1EFE2;"></div>
<div class="t" style="left:692px;top:651px;width:118px;text-align:right;font-size:12px;letter-spacing:-0.6px;-webkit-text-stroke:0;">0</div>
<div class="t" style="left:27px;top:679px;font-size:14px;letter-spacing:0px;-webkit-text-stroke:0;">钢带<span class="m" style="font-size:13px;letter-spacing:-0.9px">0.3</span></div>
<div style="left:92px;top:679px;width:121px;height:21px;background:#fff;border-top:1px solid #ACA899;border-left:1px solid #ACA899;border-bottom:1px solid #fff;border-right:1px solid #fff;box-shadow:inset 1px 1px 0 #716F64, inset -1px -1px 0 #F1EFE2;"></div>
<div class="t" style="left:92px;top:683px;width:118px;text-align:right;font-size:12px;letter-spacing:-0.6px;-webkit-text-stroke:0;">0</div>
<div class="t" style="left:219px;top:679px;font-size:14px;letter-spacing:0px;-webkit-text-stroke:0;">钢带<span class="m" style="font-size:13px;letter-spacing:-0.9px">0.5</span></div>
<div style="left:292px;top:679px;width:121px;height:21px;background:#fff;border-top:1px solid #ACA899;border-left:1px solid #ACA899;border-bottom:1px solid #fff;border-right:1px solid #fff;box-shadow:inset 1px 1px 0 #716F64, inset -1px -1px 0 #F1EFE2;"></div>
<div class="t" style="left:292px;top:683px;width:118px;text-align:right;font-size:12px;letter-spacing:-0.6px;-webkit-text-stroke:0;">0</div>
<div class="t" style="left:427px;top:679px;font-size:14px;letter-spacing:0px;-webkit-text-stroke:0;">铝合金带</div>
<div style="left:492px;top:679px;width:121px;height:21px;background:#fff;border-top:1px solid #ACA899;border-left:1px solid #ACA899;border-bottom:1px solid #fff;border-right:1px solid #fff;box-shadow:inset 1px 1px 0 #716F64, inset -1px -1px 0 #F1EFE2;"></div>
<div class="t" style="left:492px;top:683px;width:118px;text-align:right;font-size:12px;letter-spacing:-0.6px;-webkit-text-stroke:0;">0</div>
<div class="t" style="left:627px;top:679px;font-size:14px;letter-spacing:0px;-webkit-text-stroke:0;">半导体尼龙绸布带</div>
<div style="left:756px;top:679px;width:65px;height:21px;overflow:hidden;"><div style="left:0;top:0;width:121px;height:21px;background:#fff;border-top:1px solid #ACA899;border-left:1px solid #ACA899;border-bottom:1px solid #fff;border-right:1px solid #fff;box-shadow:inset 1px 1px 0 #716F64, inset -1px -1px 0 #F1EFE2;"></div></div>
<div style="left:820px;top:651px;width:1px;height:1px;background:#000;"></div>
<div style="left:820px;top:654px;width:1px;height:1px;background:#000;"></div>
</body></html>
